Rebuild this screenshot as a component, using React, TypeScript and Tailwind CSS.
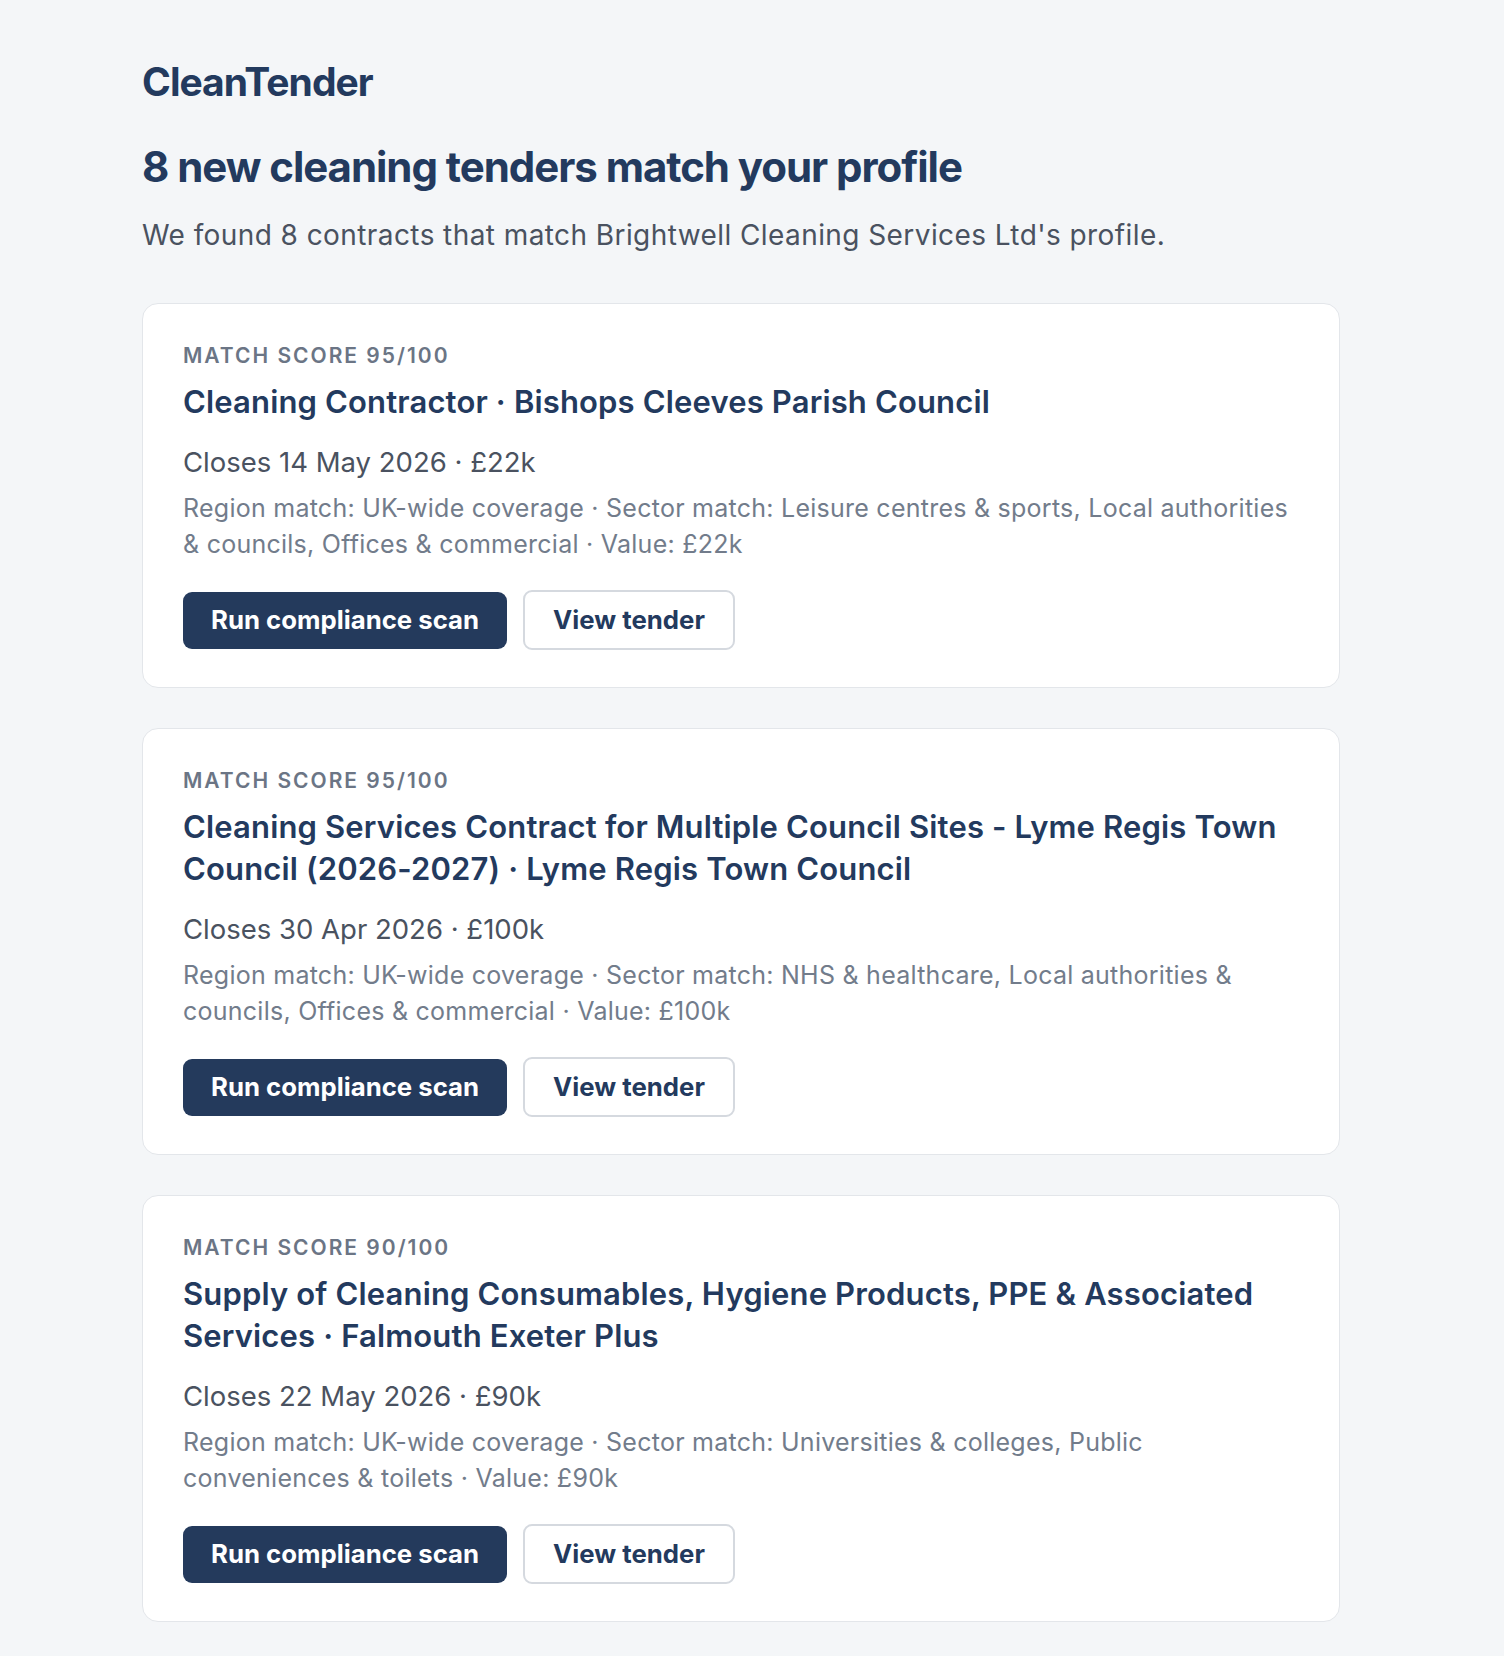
const tenders = [
  {
    score: 95,
    title: "Cleaning Contractor · Bishops Cleeves Parish Council",
    closes: "Closes 14 May 2026 · £22k",
    detail:
      "Region match: UK-wide coverage · Sector match: Leisure centres & sports, Local authorities & councils, Offices & commercial · Value: £22k",
  },
  {
    score: 95,
    title:
      "Cleaning Services Contract for Multiple Council Sites - Lyme Regis Town Council (2026-2027) · Lyme Regis Town Council",
    closes: "Closes 30 Apr 2026 · £100k",
    detail:
      "Region match: UK-wide coverage · Sector match: NHS & healthcare, Local authorities & councils, Offices & commercial · Value: £100k",
  },
  {
    score: 90,
    title:
      "Supply of Cleaning Consumables, Hygiene Products, PPE & Associated Services · Falmouth Exeter Plus",
    closes: "Closes 22 May 2026 · £90k",
    detail:
      "Region match: UK-wide coverage · Sector match: Universities & colleges, Public conveniences & toilets · Value: £90k",
  },
];

function TenderCard({ score, title, closes, detail }: (typeof tenders)[number]) {
  return (
    <div className="rounded-2xl border border-[#e3e6ea] bg-white px-10 pt-10 pb-[37px]">
      <p className="text-[21px] leading-6 font-semibold tracking-[0.095em] text-[#6b7585]">
        MATCH SCORE {score}/100
      </p>
      <h2 className="mt-[13px] text-[31px] leading-[42px] font-semibold tracking-[0.005em] text-[#233a5e]">
        {title}
      </h2>
      <p className="mt-[21px] text-[27.5px] leading-9 text-[#4a5260]">{closes}</p>
      <p className="mt-[10px] text-[25px] leading-9 tracking-[0.01em] text-[#727c8b]">{detail}</p>
      <div className="mt-[28px] flex items-center gap-4">
        <button className="h-[57px] rounded-[9px] bg-[#243a5c] px-7 text-[25.75px] font-bold text-white">
          Run compliance scan
        </button>
        <button className="h-[60px] rounded-[9px] border-2 border-[#d5d9df] bg-white px-7 text-[25.75px] font-bold text-[#233a5e]">
          View tender
        </button>
      </div>
    </div>
  );
}

export default function App() {
  return (
    <div className="min-h-screen bg-[#f4f6f8] pl-[142px] pt-[58px] pb-9 font-['Inter',sans-serif]">
      <div className="w-[1198px]">
        <div className="text-[39px] leading-[48px] font-bold tracking-tight text-[#233a5e]">CleanTender</div>
        <h1 className="mt-[35px] text-[42px] leading-[52px] font-bold tracking-tight text-[#233a5e]">
          8 new cleaning tenders match your profile
        </h1>
        <p className="mt-6 text-[28px] leading-9 tracking-[0.015em] text-[#4a5260]">
          We found 8 contracts that match Brightwell Cleaning Services Ltd's profile.
        </p>
        <div className="mt-[50px] flex flex-col gap-10">
          {tenders.map((t, i) => (
            <TenderCard key={i} {...t} />
          ))}
        </div>
      </div>
    </div>
  );
}
